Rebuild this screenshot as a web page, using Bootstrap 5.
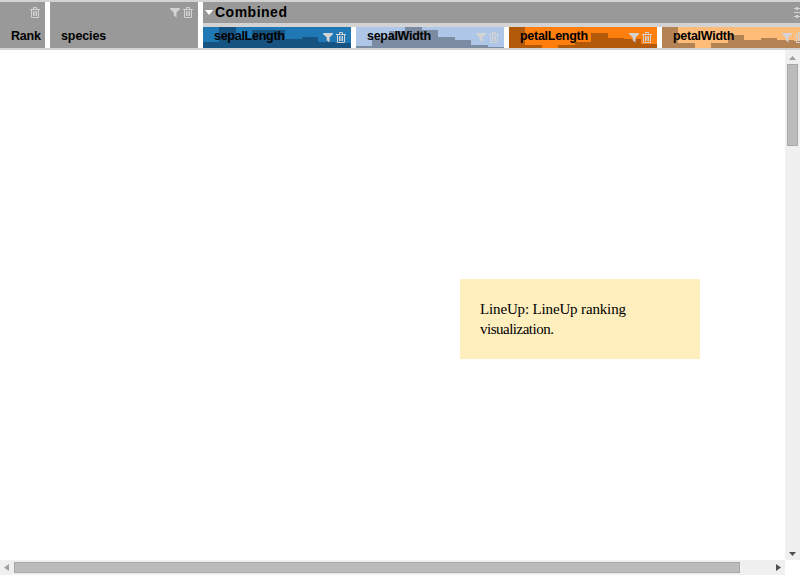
<!DOCTYPE html>
<html lang="en">
<head>
<meta charset="utf-8">
<meta name="viewport" content="width=device-width, initial-scale=1">
<title>LineUp</title>
<link rel="stylesheet" href="https://cdn.jsdelivr.net/npm/bootstrap@5.3.0/dist/css/bootstrap.min.css">
<style>
body{font-family:"Liberation Sans",Arial,sans-serif;color:#000;line-height:1}
.lu-head{height:50px;background:#d3d3d3;padding:2px 0}
.lu-cols{height:46px;gap:5px;background:linear-gradient(90deg,#fff 203px,transparent 203px)}
.lu-col{background:#999;height:46px;font-size:12.5px;font-weight:700;padding:5px 5px 6px 11px}
.lu-rank{width:45px;letter-spacing:-.2px}
.lu-species{width:148px;letter-spacing:-.1px}
.lu-group{width:612px}
.lu-title{height:21px;background:#999;font-size:14px;font-weight:700;letter-spacing:.5px;padding-bottom:1px}
.lu-subs{height:21px;margin-top:4px;gap:5px;background:#fff}
.lu-sub{width:148px;height:21px;font-size:12.5px;font-weight:700;letter-spacing:-.27px;padding:0 5px 0 11px}
.lu-hist{left:0;top:0;width:148px;height:21px}
.lu-tools{color:#d3d3d3;gap:3px}
.twisty{width:0;height:0;border:4px solid transparent;border-top:5px solid #fff;border-bottom:0;margin:0 2px}
.c1{background:#1f77b4;color:#165380}
.c2{background:#aec7e8;color:#7a8ba2}
.c3{background:#ff7f0e;color:#b2590a}
.c4{background:#ffbb78;color:#b38354}
.lu-name{color:#000;padding-bottom:2px}
.lu-note{left:460px;top:279px;width:240px;height:80px;background:#ffefbf;padding:20px;font:15px/20px "Liberation Serif","Times New Roman",serif;letter-spacing:-.15px}
.lu-tight{letter-spacing:-.5px}
.sb{background:#f0f0f0}
.sb-v{width:15px;padding:6px 0 4px}
.sb-h{height:15px;width:785px;padding:0 4px}
.thumb{background:#bcbcbc;border:1px solid #a8a8a8}
.sb-v .thumb{width:11px;height:82px;margin-top:4px}
.sb-h .thumb{height:11px;width:726px;margin-left:5px}
</style>
<script src="https://cdn.jsdelivr.net/npm/bootstrap@5.3.0/dist/js/bootstrap.bundle.min.js"></script>
</head>
<body class="bg-white overflow-hidden">
<svg width="0" height="0" class="position-absolute">
<symbol id="filter" viewBox="0 0 10 11"><path d="M0 1H10V2L6.5 5.5V10.5L3.7 8.3V5.5L0 2Z" fill="currentColor"/></symbol>
<symbol id="trash" viewBox="0 0 10 11"><path d="M0 2.5H10M3.5 2V.5H6.5V2M1.5 3V10.5H8.5V3M3.5 4V9M5 4V9M6.5 4V9" fill="none" stroke="currentColor"/></symbol>
</svg>
<div class="vh-100 d-flex flex-column">
<header class="lu-head flex-shrink-0 overflow-hidden">
<div class="lu-cols d-flex">
<div class="lu-col lu-rank flex-shrink-0 d-flex flex-column justify-content-between">
<span class="lu-tools d-flex align-self-end"><svg width="10" height="11"><use href="#trash"/></svg></span>
<span>Rank</span>
</div>
<div class="lu-col lu-species flex-shrink-0 d-flex flex-column justify-content-between">
<span class="lu-tools d-flex align-self-end"><svg width="10" height="11"><use href="#filter"/></svg><svg width="10" height="11"><use href="#trash"/></svg></span>
<span>species</span>
</div>
<div class="lu-group flex-shrink-0">
<div class="lu-title d-flex align-items-center"><span class="twisty"></span><span>Combined</span><svg class="lu-tools ms-auto me-2 flex-shrink-0" width="13" height="11" viewBox="0 0 13 11"><path d="M0 1.5H13M0 5.5H13M0 9.5H13" stroke="currentColor"/><path d="M2 0H4V3H2ZM6 4H8V7H6ZM2 8H4V11H2Z" fill="currentColor"/></svg></div>
<div class="lu-subs d-flex">
<div class="lu-sub c1 flex-shrink-0 position-relative d-flex align-items-center justify-content-between">
<svg class="lu-hist position-absolute" viewBox="0 0 9 21" preserveAspectRatio="none" shape-rendering="crispEdges"><path d="M0 21V15H1V0H2V12H3V3H5V12H6V10H7V15H8V16H9V21Z" fill="currentColor"/></svg>
<span class="lu-name position-relative">sepalLength</span><span class="lu-tools position-relative d-flex"><svg width="10" height="11"><use href="#filter"/></svg><svg width="10" height="11"><use href="#trash"/></svg></span></div>
<div class="lu-sub c2 flex-shrink-0 position-relative d-flex align-items-center justify-content-between">
<svg class="lu-hist position-absolute" viewBox="0 0 9 21" preserveAspectRatio="none" shape-rendering="crispEdges"><path d="M0 21V19H1V12H2V4H3V0H4V3H5V10H6V13H7V18H8V20H9V21Z" fill="currentColor"/></svg>
<span class="lu-name position-relative">sepalWidth</span><span class="lu-tools position-relative d-flex"><svg width="10" height="11"><use href="#filter"/></svg><svg width="10" height="11"><use href="#trash"/></svg></span></div>
<div class="lu-sub c3 flex-shrink-0 position-relative d-flex align-items-center justify-content-between">
<svg class="lu-hist position-absolute" viewBox="0 0 9 21" preserveAspectRatio="none" shape-rendering="crispEdges"><path d="M0 21V0H1V18H2V21H3V18H4V15H5V6H6V11H7V12H8V17H9V21Z" fill="currentColor"/></svg>
<span class="lu-name position-relative">petalLength</span><span class="lu-tools position-relative d-flex"><svg width="10" height="11"><use href="#filter"/></svg><svg width="10" height="11"><use href="#trash"/></svg></span></div>
<div class="lu-sub c4 flex-shrink-0 position-relative d-flex align-items-center justify-content-between">
<svg class="lu-hist position-absolute" viewBox="0 0 9 21" preserveAspectRatio="none" shape-rendering="crispEdges"><path d="M0 21V0H1V16H2V21H3V16H4V8H5V13H6V11H7V13H8V14H9V21Z" fill="currentColor"/></svg>
<span class="lu-name position-relative">petalWidth</span><span class="lu-tools position-relative d-flex"><svg width="10" height="11"><use href="#filter"/></svg><svg width="10" height="11"><use href="#trash"/></svg></span></div>
</div>
</div>
</div>
</header>
<main class="flex-grow-1 d-flex justify-content-end">
<div class="sb sb-v d-flex flex-column align-items-center">
<svg width="7" height="4" viewBox="0 0 7 4"><path d="M0 4L3.5 0L7 4Z" fill="#a0a0a0"/></svg>
<div class="thumb"></div>
<svg class="mt-auto" width="7" height="4" viewBox="0 0 7 4"><path d="M0 0L3.5 4L7 0Z" fill="#505050"/></svg>
</div>
</main>
<div class="sb sb-h d-flex align-items-center flex-shrink-0">
<svg class="flex-shrink-0" width="5" height="7" viewBox="0 0 5 7"><path d="M5 0L0 3.5L5 7Z" fill="#a0a0a0"/></svg>
<div class="thumb flex-shrink-0"></div>
<svg class="ms-auto" width="5" height="7" viewBox="0 0 5 7"><path d="M0 0L5 3.5L0 7Z" fill="#505050"/></svg>
</div>
</div>
<div class="lu-note position-absolute">LineUp: LineUp ranking <span class="lu-tight">visualization.</span></div>
</body>
</html>
